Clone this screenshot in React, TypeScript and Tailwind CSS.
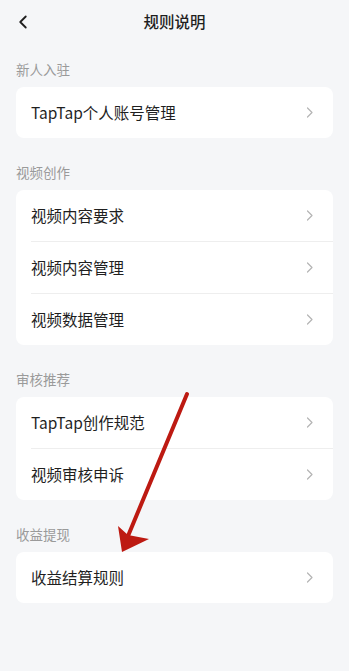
import { ChevronLeft } from "lucide-react";

type Section = { title: string; items: string[] };

const sections: Section[] = [
  { title: "新人入驻", items: ["TapTap个人账号管理"] },
  { title: "视频创作", items: ["视频内容要求", "视频内容管理", "视频数据管理"] },
  { title: "审核推荐", items: ["TapTap创作规范", "视频审核申诉"] },
  { title: "收益提现", items: ["收益结算规则"] },
];

function Chevron() {
  return (
    <svg width="8" height="11" viewBox="0 0 8 11" fill="none" className="shrink-0">
      <path d="M1.5 1 L6 5.5 L1.5 10" stroke="#b4b4b4" strokeWidth="1.2" strokeLinecap="round" strokeLinejoin="round" />
    </svg>
  );
}

function RuleCard({ items }: { items: string[] }) {
  return (
    <div className="mx-4 rounded-lg bg-white overflow-hidden">
      {items.map((item, i) => (
        <div key={item}>
          {i > 0 && <div className="ml-[15px] h-px bg-[#eeeeee]" />}
          <div className="flex h-[51px] items-center justify-between pl-[15px] pr-[19px]">
            <span className="text-[15.5px] text-[#1f1f1f]">{item}</span>
            <Chevron />
          </div>
        </div>
      ))}
    </div>
  );
}

// red annotation arrow drawn over the list
function Arrow() {
  return (
    <svg className="pointer-events-none absolute left-0 top-0" width="349" height="671" viewBox="0 0 349 671">
      <line x1="187" y1="394" x2="128" y2="536" stroke="#bd1a12" strokeWidth="4" strokeLinecap="round" />
      <polygon points="122,552 118,526 128,535 149,539" fill="#bd1a12" />
    </svg>
  );
}

export default function App() {
  return (
    <div
      className="relative min-h-[671px] w-full bg-[#f5f6f8]"
      style={{ fontFamily: '"Noto Sans CJK SC", "Noto Sans", sans-serif' }}
    >
      <header className="relative flex h-11 items-center justify-center">
        <button className="absolute left-3 top-1/2 -translate-y-1/2 text-[#1f1f1f]">
          <ChevronLeft className="h-[22px] w-[22px]" strokeWidth={2} />
        </button>
        <h1 className="text-[15.5px] font-medium text-[#1f1f1f]">规则说明</h1>
      </header>

      {sections.map((s, i) => (
        <section key={s.title}>
          <div className={`${i === 0 ? "pt-[15px]" : "pt-6"} pb-2 px-4`}>
            <h2 className="h-5 text-[13.5px] leading-5 text-[#9a9a9a]">{s.title}</h2>
          </div>
          <RuleCard items={s.items} />
        </section>
      ))}

      <Arrow />
    </div>
  );
}
